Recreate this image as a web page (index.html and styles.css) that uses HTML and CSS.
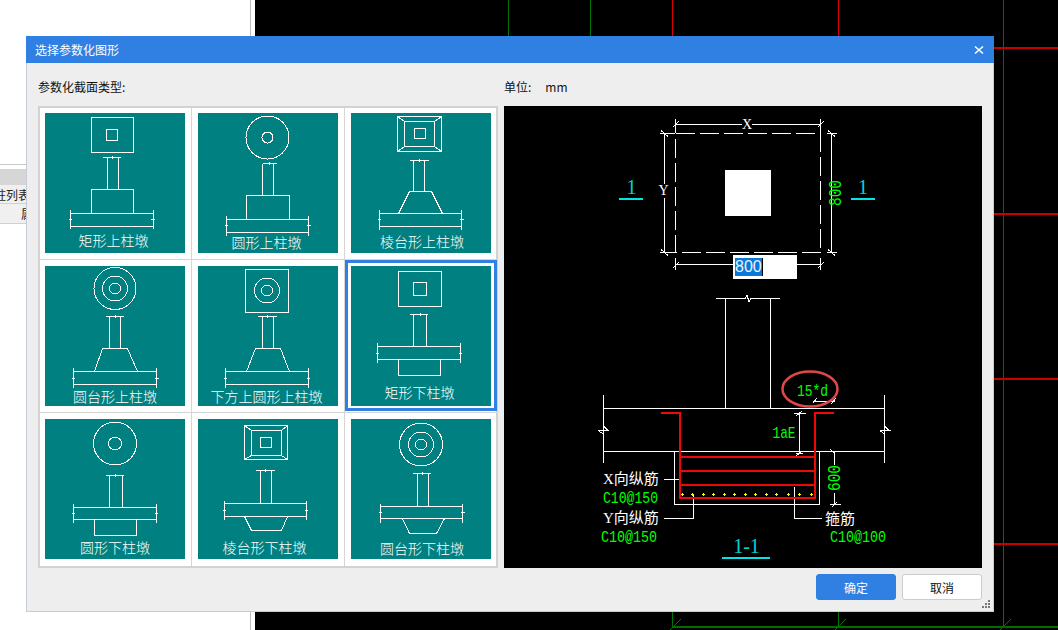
FILE: index.html
```html
<!DOCTYPE html>
<html lang="zh-CN">
<head>
<meta charset="utf-8">
<title>选择参数化图形</title>
<link rel="stylesheet" href="styles.css">
</head>
<body>
<div class="page">
  <aside class="side">
    <div class="side-line"></div>
    <div class="side-band"></div>
    <div class="side-row side-tab"><span>柱列表</span></div>
    <div class="side-row side-head"><span>属性</span></div>
  </aside>
  <main class="cad">
    <svg class="cad-svg" width="803" height="630" viewBox="255 0 803 630">
      <path class="g" d="M508.5 0V100M590.5 0V100M672.5 544V627M838.5 544V627M1003.5 544V627"/>
      <path class="gh" d="M672 627H1058"/>
      <path class="g" d="M670 630L681 619M835 630L846 619M1000 630L1011 619"/>
      <path class="r" d="M672.5 0V544M838.5 0V544M1003.5 0V544"/>
      <path class="rh" d="M672 48H1058M672 214H1058M672 379H1058M672 544H1058"/>
    </svg>
  </main>
</div>

<section class="dialog">
  <header class="dialog-title">
    <span>选择参数化图形</span>
    <svg class="close" width="10" height="10" viewBox="0 0 10 10"><path d="M1 1.5L9 8.5M9 1.5L1 8.5"/></svg>
  </header>
  <div class="dialog-main">
    <div class="pane-left">
      <div class="pane-label">参数化截面类型:</div>
      <div class="tile-grid">
        <div class="cell"><svg class="tile" width="140" height="140" viewBox="0 0 140 140">
          <rect class="d" x="46.5" y="4.5" width="42" height="35"/><rect class="d" x="61.5" y="16.5" width="11" height="11"/>
          <path class="d" d="M58 44.5H76M67.5 43V46M62.5 44.5V76.5M73.5 44.5V76.5"/>
          <rect class="d" x="46.5" y="76.5" width="42" height="24"/><rect class="d" x="25.5" y="100.5" width="83" height="13"/>
          <path class="d" d="M25.5 97V116M108.5 97V116M24 106.5H27M106 106.5H110"/>
          <text class="lbl" x="68.5" y="133">矩形上柱墩</text></svg></div>

        <div class="cell"><svg class="tile" width="140" height="140" viewBox="0 0 140 140">
          <circle class="d" cx="69.5" cy="24.5" r="21.5"/><circle class="d" cx="69.5" cy="24.5" r="5.5"/>
          <path class="d" d="M64.5 50.5H78.5M71.5 49V52M64.5 50.5V82.5M75.5 50.5V82.5"/>
          <rect class="d" x="48.5" y="82.5" width="43" height="24"/><rect class="d" x="28.5" y="106.5" width="82" height="13"/>
          <path class="d" d="M28.5 103V122.5M110.5 103V122.5M27 112.5H30M109 112.5H113"/>
          <text class="lbl" x="68.5" y="134.5">圆形上柱墩</text></svg></div>

        <div class="cell"><svg class="tile" width="140" height="140" viewBox="0 0 140 140">
          <rect class="d" x="46.5" y="3.5" width="44" height="35"/><rect class="d" x="53.5" y="8.5" width="30" height="25"/><rect class="d" x="63.5" y="15.5" width="11" height="10"/>
          <path class="d" d="M46.5 3.5L53.5 8.5M90.5 3.5L83.5 8.5M46.5 38.5L53.5 33.5M90.5 38.5L83.5 33.5"/>
          <path class="d" d="M59 47.5H78M68.5 46V49M62.5 47.5V78.5M73.5 47.5V78.5"/>
          <path class="d" d="M58.5 78.5H80.5L91.5 100.5M58.5 78.5L47.5 100.5"/>
          <rect class="d" x="28.5" y="100.5" width="82" height="13"/>
          <path class="d" d="M28.5 97V116.5M110.5 97V116.5M27 106.5H30M109 106.5H113"/>
          <text class="lbl" x="71" y="134">棱台形上柱墩</text></svg></div>

        <div class="cell"><svg class="tile" width="140" height="140" viewBox="0 0 140 140">
          <circle class="d" cx="70" cy="22.5" r="21"/><circle class="d" cx="70" cy="22.5" r="12.5"/><circle class="d" cx="70" cy="22.5" r="5.5"/>
          <path class="d" d="M61 50.5H79M70.5 49V52M64.5 50.5V82.5M75.5 50.5V82.5"/>
          <path class="d" d="M57.5 82.5H82.5L92.5 105.5M57.5 82.5L49.5 105.5"/>
          <rect class="d" x="28.5" y="105.5" width="83" height="13"/>
          <path class="d" d="M28.5 102V122M111.5 102V122M27 112.5H30M110 112.5H114"/>
          <text class="lbl" x="70" y="136">圆台形上柱墩</text></svg></div>

        <div class="cell"><svg class="tile" width="140" height="140" viewBox="0 0 140 140">
          <rect class="d" x="47.5" y="3.5" width="43" height="43"/><circle class="d" cx="69" cy="24.5" r="12.5"/><circle class="d" cx="69" cy="24.5" r="5.5"/>
          <path class="d" d="M60 50.5H79M69.5 49V52M64.5 50.5V82.5M75.5 50.5V82.5"/>
          <path class="d" d="M57.5 82.5H82.5L91.5 105.5M57.5 82.5L48.5 105.5"/>
          <rect class="d" x="27.5" y="105.5" width="83" height="13"/>
          <path class="d" d="M27.5 102V122M110.5 102V122M26 112.5H29M109 112.5H112"/>
          <text class="lbl" x="68.5" y="135.5">下方上圆形上柱墩</text></svg></div>

        <div class="cell selected"><svg class="tile" width="140" height="140" viewBox="0 0 140 140">
          <rect class="d" x="47.5" y="5.5" width="43" height="35"/><rect class="d" x="62.5" y="16.5" width="13" height="13"/>
          <path class="d" d="M59 48.5H77M69.5 47V50M62.5 48.5V80.5M75.5 48.5V80.5"/>
          <rect class="d" x="26.5" y="80.5" width="83" height="13"/>
          <path class="d" d="M26.5 77V96.5M109.5 77V96.5M25 87.5H28M108 87.5H111M47.5 93.5V109.5H89.5V93.5"/>
          <text class="lbl" x="68.5" y="131.5">矩形下柱墩</text></svg></div>

        <div class="cell"><svg class="tile" width="140" height="140" viewBox="0 0 140 140">
          <circle class="d" cx="70" cy="24.5" r="21.5"/><circle class="d" cx="70" cy="24.5" r="6.5"/>
          <path class="d" d="M61 56.5H79M70.5 55V58M64.5 56.5V88.5M77.5 56.5V88.5"/>
          <rect class="d" x="28.5" y="88.5" width="83" height="12"/>
          <path class="d" d="M28.5 84.5V104M111.5 84.5V104M27 94.5H30M110 94.5H113M49.5 100.5V116.5H91.5V100.5"/>
          <text class="lbl" x="70" y="133.5">圆形下柱墩</text></svg></div>

        <div class="cell"><svg class="tile" width="140" height="140" viewBox="0 0 140 140">
          <rect class="d" x="46.5" y="6.5" width="43" height="34"/><rect class="d" x="53.5" y="11.5" width="30" height="25"/><rect class="d" x="62.5" y="18.5" width="11" height="10"/>
          <path class="d" d="M46.5 6.5L53.5 11.5M89.5 6.5L83.5 11.5M46.5 40.5L53.5 36.5M89.5 40.5L83.5 36.5"/>
          <path class="d" d="M58 51.5H77M67.5 50V53M62.5 51.5V84.5M73.5 51.5V84.5"/>
          <rect class="d" x="26.5" y="84.5" width="82" height="13"/>
          <path class="d" d="M26.5 81.5V101M108.5 81.5V101M25 91.5H28M107 91.5H110M46.5 97.5L53.5 111.5H83.5L89.5 97.5"/>
          <text class="lbl" x="66.5" y="133.5">棱台形下柱墩</text></svg></div>

        <div class="cell"><svg class="tile" width="140" height="140" viewBox="0 0 140 140">
          <circle class="d" cx="70" cy="25.5" r="21.5"/><circle class="d" cx="70" cy="25.5" r="12.5"/><circle class="d" cx="70" cy="25.5" r="5.5"/>
          <path class="d" d="M62 54.5H80M71.5 53V56M66.5 54.5V87.5M77.5 54.5V87.5"/>
          <rect class="d" x="29.5" y="87.5" width="82" height="12"/>
          <path class="d" d="M29.5 85V104M111.5 85V104M28 93.5H31M110 93.5H114M51.5 99.5L58.5 114.5H85.5L93.5 99.5"/>
          <text class="lbl" x="71" y="134.5">圆台形下柱墩</text></svg></div>
      </div>
    </div>

    <div class="pane-right">
      <div class="pane-label unit"><span>单位:</span><span>mm</span></div>
      <div class="preview">
        <svg class="preview-svg" width="478" height="462" viewBox="504 106 478 462">
          <!-- plan -->
          <rect class="d dash" x="675.5" y="133.5" width="145" height="119"/>
          <rect class="solid" x="725" y="170" width="46" height="46"/>
          <path class="d" d="M675.5 124.5H742M752 124.5H820.5M675.5 119V133M820.5 119V133M672.5 127.5L678.5 121.5M817.5 127.5L823.5 121.5"/>
          <path class="d" d="M664.5 133.5V184M664.5 198V252.5M660 133.5H675M660 252.5H675M661 130.5L668 136.5M661 249.5L668 255.5"/>
          <path class="d" d="M831.5 133.5V252.5M827 133.5H837M827 252.5H837M828 130.5L835 136.5M828 249.5L835 255.5"/>
          <path class="d" d="M675.5 264.5H733M797 264.5H820.5M675.5 258V270M820.5 258V270M672.5 268.5L678.5 262.5M817.5 268.5L823.5 262.5"/>
          <text class="serif-w" x="747" y="129">X</text>
          <text class="serif-w" x="663.5" y="195">Y</text>
          <text class="num-v" transform="translate(841 193) rotate(-90)" text-anchor="middle" textLength="26" lengthAdjust="spacingAndGlyphs">800</text>
          <text class="cy" x="631.5" y="194">1</text>
          <text class="cy" x="863" y="194">1</text>
          <path class="cyl" d="M619 199H643M851 199H875"/>

          <!-- section -->
          <path class="d" d="M725.5 298.5V408M770.5 298.5V408M716 298.5H745L747 295L749 302L751 298.5H780"/>
          <path class="d" d="M603 408.5H885M603 451.5H885M603.5 395V463M884.5 395V463"/>
          <path class="d" d="M598 430.5H609M603.5 426L608 430.5M598 430.5L603.5 434M880 430.5H891M884.5 426L889 430.5M880 430.5L884.5 434"/>
          <path class="d" d="M674.5 451.5V504.5H819.5V451.5"/>
          <path class="d" d="M799.5 413V453M794 413.5H806M796 453.5H803M796 416L802 411M796 456L802 451"/>
          <path class="d" d="M834.5 452V465M834.5 493V504M830 504.5H841M830 449L835 454M832 507L837 502"/>
          <path class="d" d="M664 479.5H680M664 518.5H693.5V495M794.5 487V518.5H822"/>
          <path class="d" d="M813 401.5H835M813 403L817 398M831 404L836 398"/>
          <path class="rebar" d="M661 413H680V498H815V413H834M680 457H815M680 471H815M680 485H815"/>
          <path class="dots" d="M681 494.5h3M682.5 493v3M691 494.5h3M692.5 493v3M702 494.5h3M703.5 493v3M712 494.5h3M713.5 493v3M723 494.5h3M724.5 493v3M733 494.5h3M734.5 493v3M744 494.5h3M745.5 493v3M754 494.5h3M755.5 493v3M765 494.5h3M766.5 493v3M775 494.5h3M776.5 493v3M787 494.5h3M788.5 493v3M798 494.5h3M799.5 493v3M810 494.5h3M811.5 493v3"/>
          <ellipse class="mark" cx="810" cy="389" rx="27.5" ry="17.5"/>
          <text class="num" x="797" y="396" textLength="31" lengthAdjust="spacingAndGlyphs">15*d</text>
          <text class="num" x="772.5" y="438" textLength="23" lengthAdjust="spacingAndGlyphs">1aE</text>
          <text class="num-v" transform="translate(840 478) rotate(-90)" text-anchor="middle" textLength="26" lengthAdjust="spacingAndGlyphs">600</text>
          <text class="cjk-w" x="603" y="484">X向纵筋</text>
          <text class="num" x="603" y="502.5" textLength="55" lengthAdjust="spacingAndGlyphs">C10@150</text>
          <text class="cjk-w" x="603" y="523">Y向纵筋</text>
          <text class="num" x="601" y="541.5" textLength="56" lengthAdjust="spacingAndGlyphs">C10@150</text>
          <text class="cjk-w" x="825" y="524">箍筋</text>
          <text class="num" x="830" y="541.5" textLength="56" lengthAdjust="spacingAndGlyphs">C10@100</text>
          <text class="cy" x="746.5" y="553">1-1</text>
          <path class="cyl" d="M722 558H770"/>
        </svg>
        <div class="edit"><span class="edit-sel">800</span></div>
      </div>
    </div>
  </div>
  <footer class="dialog-foot">
    <button class="btn primary" type="button">确定</button>
    <button class="btn" type="button">取消</button>
  </footer>
  <svg class="grip" width="9" height="9" viewBox="0 0 9 9"><path d="M6 0h2v2h-2zM3 3h2v2h-2zM6 3h2v2h-2zM0 6h2v2h-2zM3 6h2v2h-2zM6 6h2v2h-2z"/></svg>
</section>
</body>
</html>
```
FILE: styles.css
```css
* { box-sizing: border-box; }
html, body { margin: 0; padding: 0; width: 1058px; height: 630px; overflow: hidden; background: #000; }
body { font-family: "Noto Sans CJK SC", "Liberation Sans", sans-serif; font-size: 12px; color: #222; position: relative; }

.page { display: flex; width: 1058px; height: 630px; }
.side { width: 255px; height: 630px; background: #fff; padding-top: 164px; overflow: hidden; position: relative; border-right: 4px solid #fff; }
.side::after { content: ""; display: block; position: absolute; left: 250px; top: 0; bottom: 0; width: 1px; background: #bdbdbd; }
.side-line { height: 1px; background: #c8c8c8; margin-bottom: 4px; width: 250px; }
.side-band { height: 16px; background: #d6d6d6; width: 250px; }
.side-row { width: 250px; background: #f0f0f0; border-bottom: 1px solid #d0d0d0; font-size: 12px; white-space: nowrap; display: flex; align-items: center; }
.side-tab { height: 19px; }
.side-tab span { margin-left: -6px; }
.side-head { height: 20px; }
.side-head span { margin-left: 21px; }

.cad { flex: 1; background: #000; height: 630px; }
.cad-svg { display: block; }
.g { fill: none; stroke: #007400; stroke-width: 1; }
.gh { fill: none; stroke: #006c00; stroke-width: 2; }
.r { fill: none; stroke: #d80000; stroke-width: 1; }
.rh { fill: none; stroke: #c80000; stroke-width: 2; }

.dialog { position: absolute; left: 26px; top: 36px; width: 968px; height: 576px; background: #eeeeee; border: 1px solid #c6ccd6; border-top: 0; }
.dialog-title { height: 27px; margin: 0 -1px; background: #2f80e2; color: #fff; display: flex; align-items: center; justify-content: space-between; padding: 0 10px 0 9px; font-size: 12px; }
.close { display: block; }
.close path { fill: none; stroke: #fff; stroke-width: 1.6; }

.dialog-main { display: flex; gap: 6px; padding: 16px 11px 0; }
.pane-left { width: 460px; }
.pane-right { width: 478px; }
.pane-label { height: 16px; line-height: 16px; font-size: 12px; color: #111; }
.unit { display: flex; gap: 14px; }
.tile-grid { display: grid; grid-template-columns: 151px 152px 151px; grid-template-rows: 151px 152px 153px; gap: 1px; border: 2px solid #d2d2d2; background: #d6d6d6; margin-top: 11px; height: 462px; }
.cell { background: #fff; padding: 6px 0 0 6px; position: relative; }
.cell:nth-child(3n+1) { padding-left: 5px; }
.cell:nth-child(-n+3) { padding-top: 5px; }
.selected::after { content: ""; position: absolute; left: 0; top: 0; right: -1px; bottom: 1px; border: 3px solid #2f80e2; }
.tile { display: block; background: #008080; }
.d { fill: none; stroke: #fff; stroke-width: 1; shape-rendering: crispEdges; }
.dash { stroke-dasharray: 19 5; }
.lbl { fill: #fff; font-size: 14px; text-anchor: middle; font-family: "Noto Sans CJK SC", sans-serif; font-weight: 300; }

.preview { position: relative; margin-top: 11px; width: 478px; height: 462px; background: #000; }
.preview-svg { display: block; }
.solid { fill: #fff; }
.serif-w { fill: #fff; font-family: "Liberation Serif", serif; font-size: 14px; text-anchor: middle; }
.num { fill: #00ff00; font-family: "Liberation Mono", monospace; font-size: 17px; }
.num-v { fill: #00ff00; font-family: "Liberation Mono", monospace; font-size: 18px; }
.cy { fill: #00d4d4; font-family: "Liberation Serif", serif; font-size: 20px; text-anchor: middle; }
.cyl { fill: none; stroke: #00e5e5; stroke-width: 2; }
.rebar { fill: none; stroke: #f00808; stroke-width: 2; }
.dots { fill: none; stroke: #ffff00; stroke-width: 1; shape-rendering: crispEdges; }
.mark { fill: none; stroke: #e04848; stroke-width: 2.5; }
.cjk-w { fill: #fff; font-family: "Liberation Serif", "Noto Sans CJK SC", serif; font-size: 15px; }
.edit { position: absolute; left: 229px; top: 149px; width: 64px; height: 24px; background: #fff; padding: 3px 0 0 2px; }
.edit-sel { display: block; width: 28px; height: 18px; line-height: 18px; background: #0a78d7; color: #e8f4ff; font-family: "Liberation Sans", sans-serif; font-size: 16px; border-right: 1px solid #000; }

.dialog-foot { display: flex; justify-content: flex-end; gap: 6px; padding: 6px 11px 0 0; }
.btn { width: 80px; height: 26px; border: 1px solid #cccccc; border-radius: 3px; background: #fff; color: #111; font-family: "Noto Sans CJK SC", sans-serif; font-size: 12px; padding: 0; }
.primary { background: #2f80e2; border-color: #2f80e2; color: #fff; }
.grip { position: absolute; right: 2px; bottom: 2px; display: block; }
.grip path { fill: #777; }
```
